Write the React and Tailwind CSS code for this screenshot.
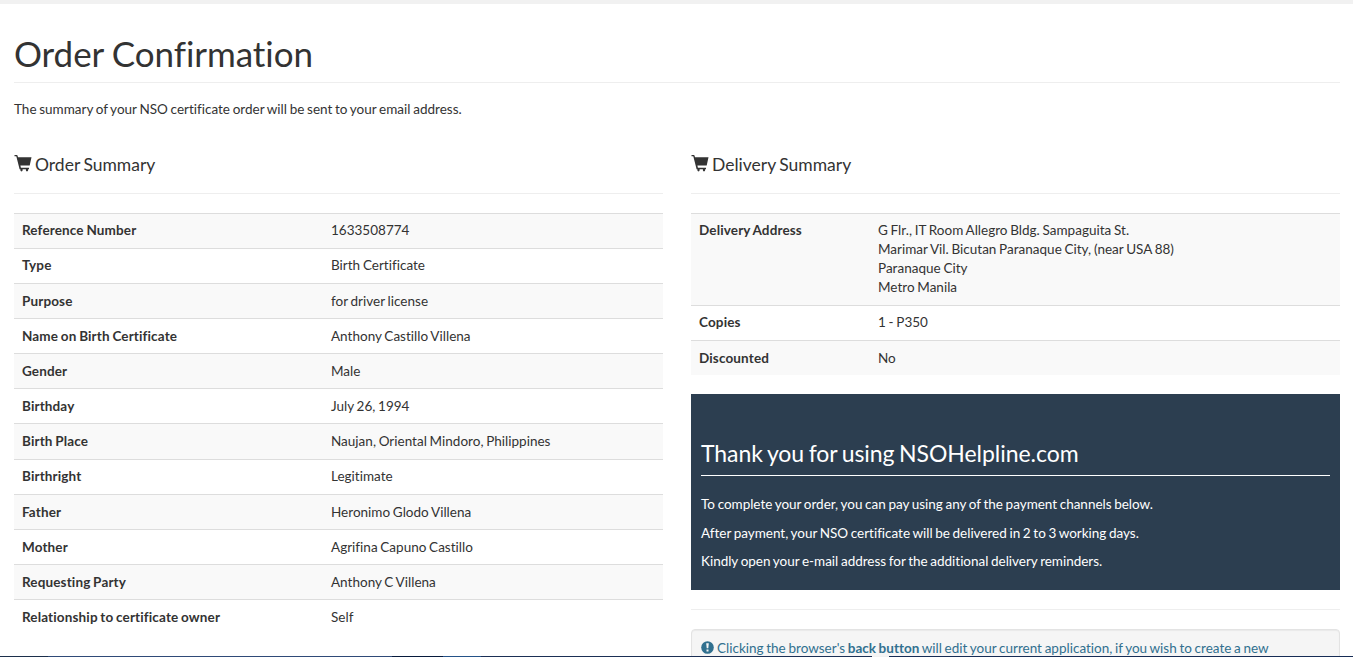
const orderRows = [
  ["Reference Number", "1633508774"],
  ["Type", "Birth Certificate"],
  ["Purpose", "for driver license"],
  ["Name on Birth Certificate", "Anthony Castillo Villena"],
  ["Gender", "Male"],
  ["Birthday", "July 26, 1994"],
  ["Birth Place", "Naujan, Oriental Mindoro, Philippines"],
  ["Birthright", "Legitimate"],
  ["Father", "Heronimo Glodo Villena"],
  ["Mother", "Agrifina Capuno Castillo"],
  ["Requesting Party", "Anthony C Villena"],
  ["Relationship to certificate owner", "Self"],
];

function CartIcon() {
  return (
    <svg className="h-[19px] w-[18px] shrink-0" viewBox="0 0 18 19" fill="#333">
      <path d="M.5 1h2.700l.9 2.200H17.500L15.700 11.500H6.400l.5 2.200H15v1.600h-.9v1a1.100 1.100 0 0 1-2.200 0v-1H8.600v1a1.100 1.100 0 0 1-2.200 0v-1h-.8L2.300 2.300H.5z" />
    </svg>
  );
}

function SectionTitle({ children }) {
  return (
    <h2 className="flex h-[40px] items-start border-b border-[#eee] text-[17.5px] leading-[22px] text-[#333] [word-spacing:-1px]">
      <CartIcon />
      <span className="ml-[3px]">{children}</span>
    </h2>
  );
}

function Row({ label, odd, columns, height, children }) {
  return (
    <div className={`grid border-t border-[#ddd] px-2 pt-[7.8px] ${height} ${columns} ${odd ? "bg-[#f9f9f9]" : ""}`}>
      <div className="font-bold tracking-[0.14px]">{label}</div>
      <div className="tracking-[0.01px]">{children}</div>
    </div>
  );
}

export default function App() {
  return (
    <div className="flex h-[657px] flex-col overflow-hidden bg-white font-['Lato',sans-serif] text-[13.5px] leading-[19px] text-[#333] [font-variant-ligatures:none] [word-spacing:-0.75px]">
      <div className="h-1 shrink-0 bg-[#f1f1f1]" />
      <main className="min-h-0 flex-1 overflow-hidden pr-[13px] pl-[14px]">
        <h1 className="h-[79px] border-b border-[#eee] pt-[29px] text-[35px] leading-[40px] tracking-[-0.05px]">Order Confirmation</h1>
        <p className="mt-[17px]">The summary of your NSO certificate order will be sent to your email address.</p>
        <div className="mt-[35px] grid grid-cols-[649px_649px] gap-[28px]">
          <section>
            <SectionTitle>Order Summary</SectionTitle>
            <div className="mt-[18.53px]">
              {orderRows.map(([label, value], i) => (
                <Row key={label} label={label} odd={i % 2 === 0} height="h-[35.16px]" columns="grid-cols-[309px_1fr]">
                  {value}
                </Row>
              ))}
            </div>
          </section>
          <section>
            <SectionTitle>Delivery Summary</SectionTitle>
            <div className="mt-[18.53px]">
              <Row label="Delivery Address" odd height="h-[92px]" columns="grid-cols-[179px_1fr]">
                G Flr., IT Room Allegro Bldg. Sampaguita St.
                <br />
                Marimar Vil. Bicutan Paranaque City, (near USA 88)
                <br />
                Paranaque City
                <br />
                Metro Manila
              </Row>
              <Row label="Copies" height="h-[35.3px]" columns="grid-cols-[179px_1fr]">1 - P350</Row>
              <Row label="Discounted" odd height="h-[35px]" columns="grid-cols-[179px_1fr]">No</Row>
            </div>
            <div className="mt-[19.17px] h-[196px] bg-[#2c3e50] px-[10px] pt-[46px] text-white">
              <h3 className="h-[36px] border-b border-white text-[23px] leading-[27px] tracking-[-0.05px] [word-spacing:-1.3px]">Thank you for using NSOHelpline.com</h3>
              <div className="mt-[19px] flex flex-col tracking-[-0.02px]">
                <p>To complete your order, you can pay using any of the payment channels below.</p>
                <p className="mt-[10px]">After payment, your NSO certificate will be delivered in 2 to 3 working days.</p>
                <p className="mt-[9px]">Kindly open your e-mail address for the additional delivery reminders.</p>
              </div>
            </div>
            <hr className="mt-[19px] border-[#eee]" />
            <div className="mt-[19px] flex h-[60px] items-start rounded border border-[#e3e3e3] bg-[#f5f5f5] px-[9px] pt-[9px] text-[#31708f] shadow-[inset_0_1px_1px_rgba(0,0,0,0.05)]">
              <svg className="mt-[2px] h-[13px] w-[13px] shrink-0" viewBox="0 0 13 13">
                <circle cx="6.5" cy="6.5" r="6.3" fill="#31708f" />
                <path d="M5.200 2.200h2.600l-.5 5H5.700zM5.500 8.500h2v2h-2z" fill="#f5f5f5" />
              </svg>
              <p className="ml-[3px] whitespace-nowrap">
                Clicking the browser's <b>back button</b> will edit your current application, if you wish to create a new
              </p>
            </div>
          </section>
        </div>
      </main>
      <footer className="flex h-px shrink-0">
        <div className="w-[48px] bg-[#1c2f4b]" />
        <div className="w-[344px] bg-[#2f4a78]" />
        <div className="w-[51px] bg-[#071a3c]" />
        <div className="w-[38px] bg-[#245288]" />
        <div className="w-[391px] bg-[#1b2f55]" />
        <div className="w-[17px] bg-[#f1f1f1]" />
        <div className="flex-1 bg-[#162c55]" />
      </footer>
    </div>
  );
}
